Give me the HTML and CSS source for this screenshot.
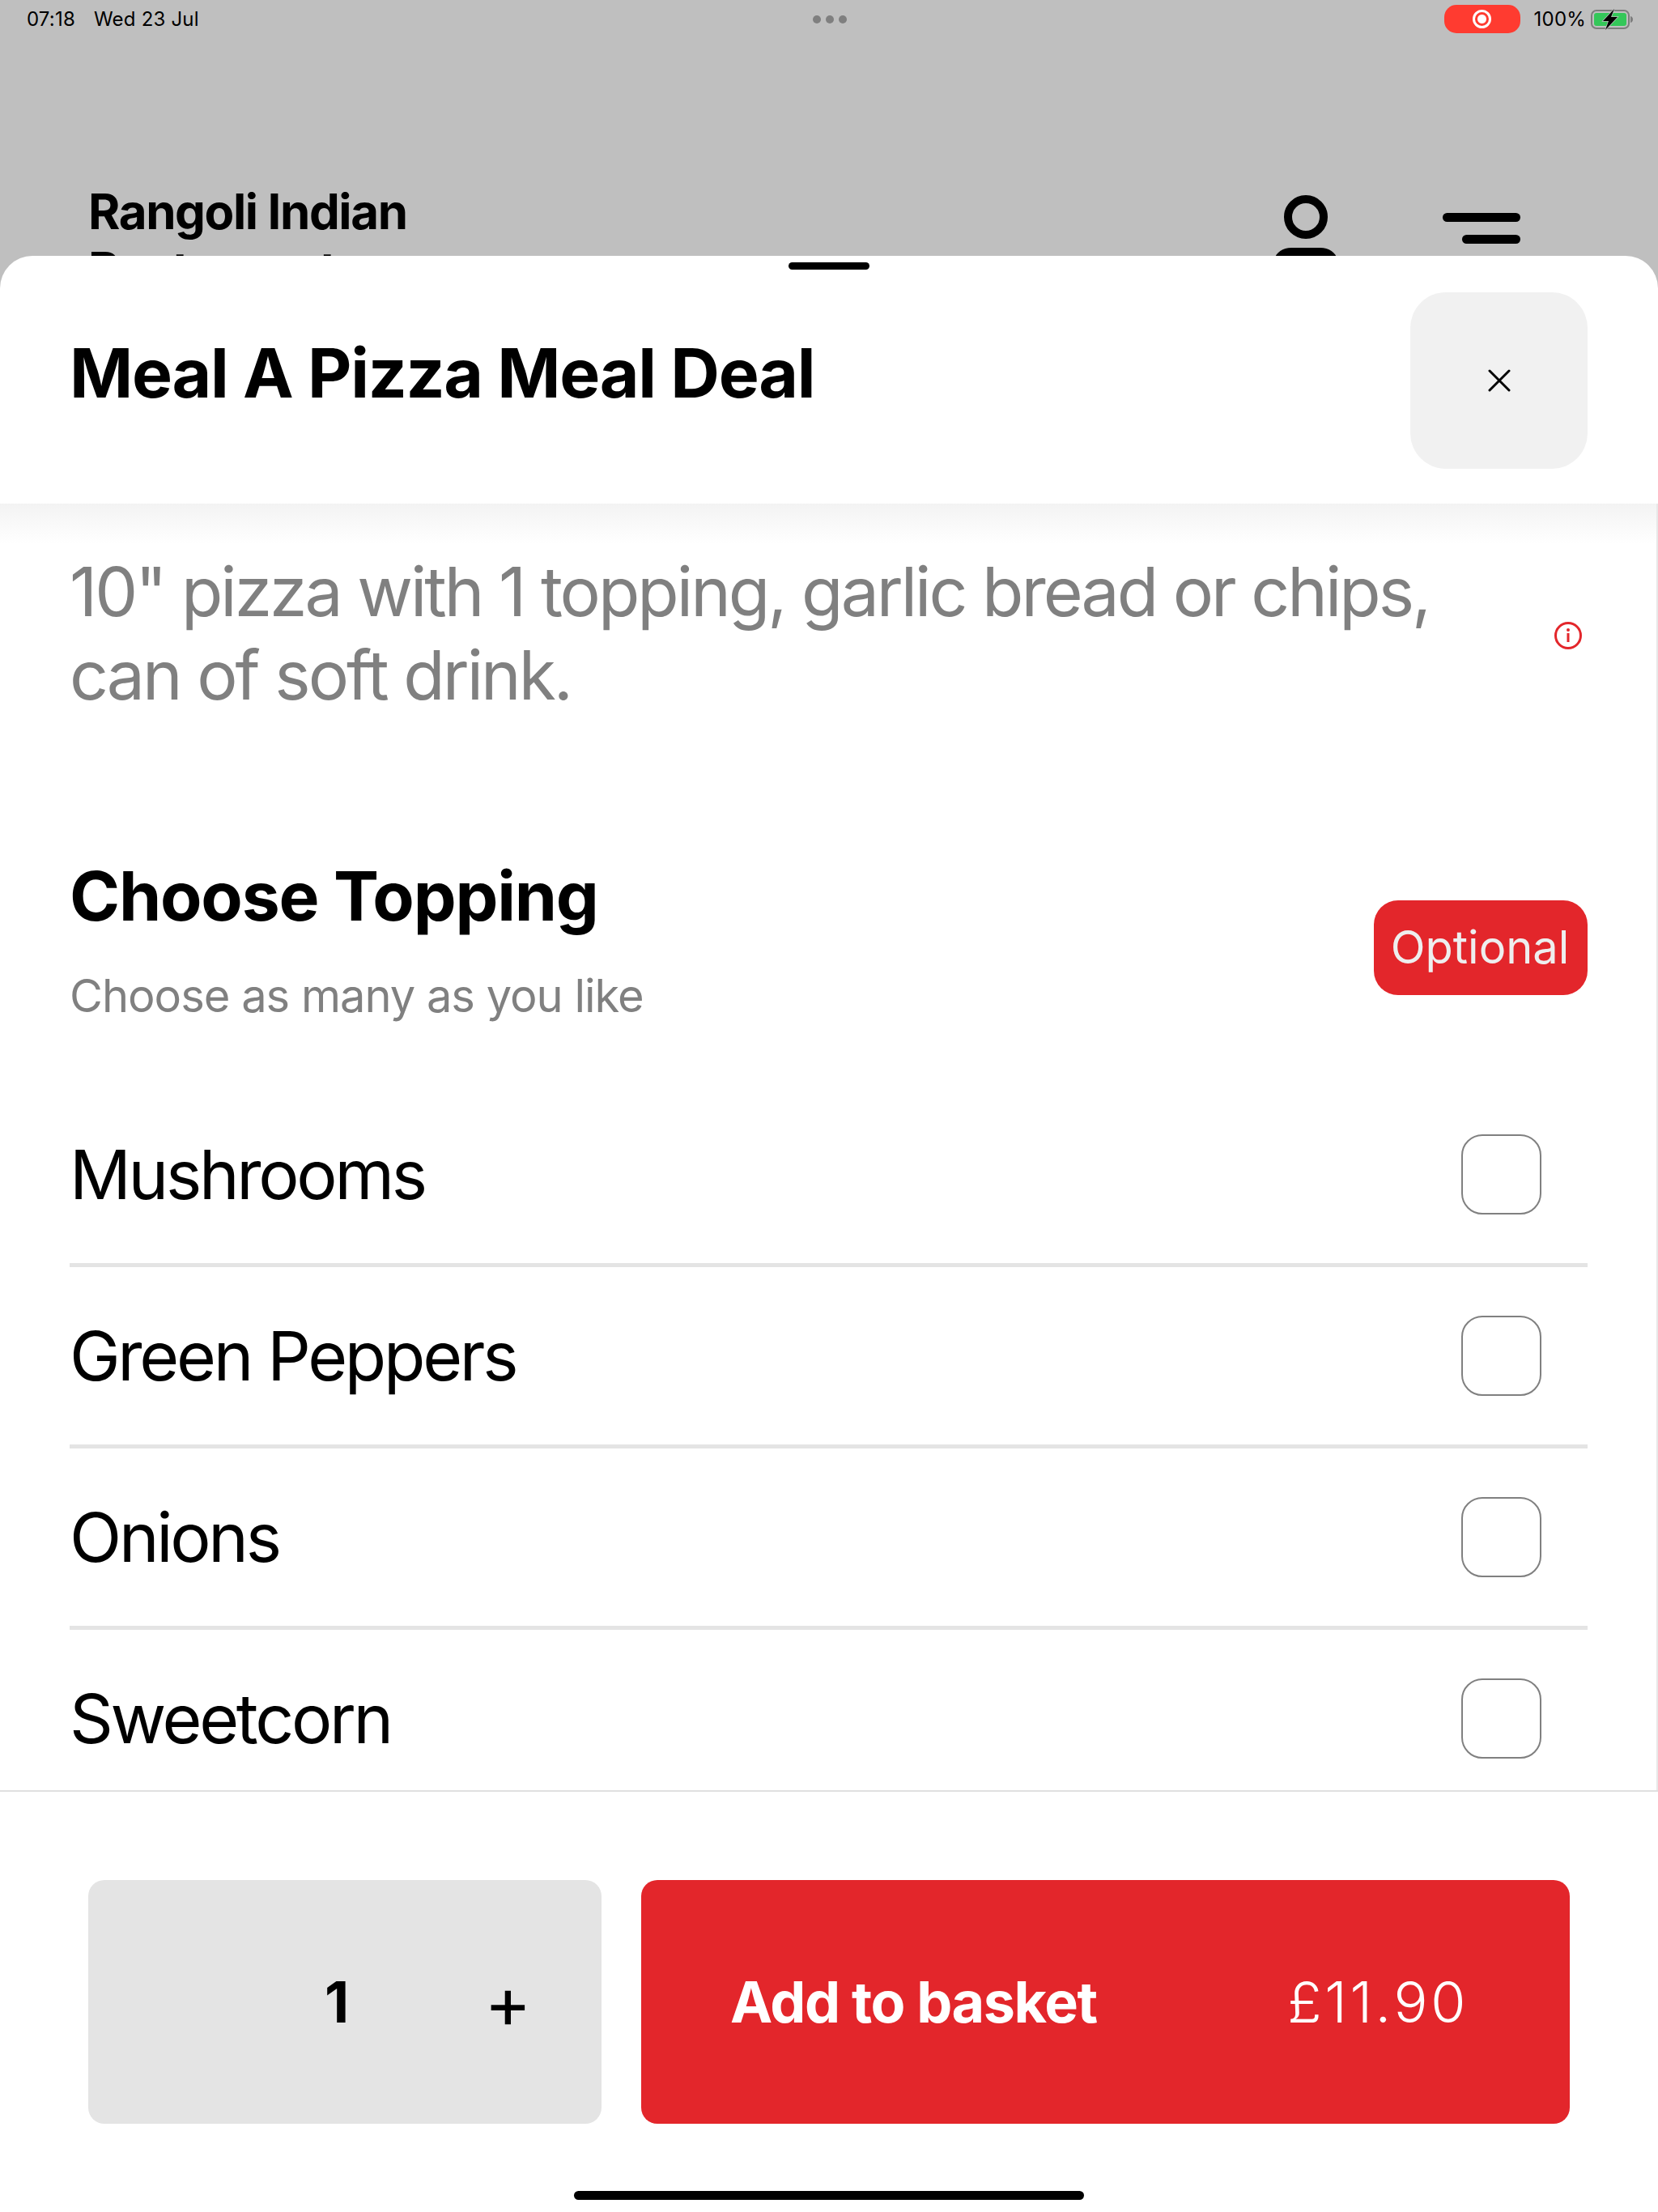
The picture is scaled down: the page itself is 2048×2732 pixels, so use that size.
FILE: index.html
```html
<!DOCTYPE html>
<html lang="en">
<head>
    <meta charset="UTF-8">
    <meta name="viewport" content="width=device-width, initial-scale=1.0">
    <title>Meal A Pizza Meal Deal</title>
    <link rel="stylesheet" href="styles.css">
</head>
<body>

    <div class="screen">
        <div class="status-bar">
            <div class="status-left">
                <span>07:18</span>
                <span>Wed 23 Jul</span>
            </div>
            <div class="status-dots"><i></i><i></i><i></i></div>
            <div class="status-right">
                <span class="record-pill"><i></i></span>
                <span class="battery-text">100%</span>
                <svg class="battery" width="53" height="26" viewBox="0 0 53 26">
                    <rect x="1" y="2" width="46" height="22" rx="6" fill="none" stroke="#7d7d7d" stroke-width="2"/>
                    <rect x="4" y="5" width="40" height="16" rx="3" fill="#34c759"/>
                    <path d="M49 9c2 .5 3 2 3 4s-1 3.500-3 4z" fill="#7d7d7d"/>
                    <path d="M29 0L15 15h7l-4 11 15-16h-8z" fill="#000" stroke="#bfbfbf" stroke-width="1.500" paint-order="stroke"/>
                </svg>
            </div>
        </div>

        <header class="site-header">
            <div class="site-name">Rangoli Indian Restaurant</div>
            <svg class="user-icon" width="84" height="80" viewBox="0 0 84 80">
                <circle cx="42" cy="27" r="22" fill="none" stroke="#000" stroke-width="10"/>
                <path d="M2 85c0-12 10-20 22-20h36c12 0 22 8 22 20z" fill="#000"/>
            </svg>
            <div class="menu-icon"><i></i><i></i></div>
        </header>

        <div class="sheet">
            <span class="grabber"></span>
            <div class="sheet-head">
                <h1>Meal A Pizza Meal Deal</h1>
                <button class="close-btn" type="button">
                    <svg width="28" height="28" viewBox="0 0 28 28">
                        <path d="M2 2l24 24M26 2L2 26" stroke="#000" stroke-width="3" stroke-linecap="round"/>
                    </svg>
                </button>
            </div>

            <div class="sheet-body">
                <div class="description">
                    <p>10" pizza with 1 topping, garlic bread or chips, can of soft drink.</p>
                    <svg class="info-icon" width="36" height="36" viewBox="0 0 36 36">
                        <circle cx="18" cy="18" r="15.500" fill="none" stroke="#e3262b" stroke-width="3"/>
                        <rect x="16.500" y="15" width="3" height="11" fill="#e3262b"/>
                        <circle cx="18" cy="11" r="2" fill="#e3262b"/>
                    </svg>
                </div>

                <div class="group-head">
                    <div>
                        <h2>Choose Topping</h2>
                        <p>Choose as many as you like</p>
                    </div>
                    <span class="badge">Optional</span>
                </div>

                <ul class="options">
                    <li><span>Mushrooms</span><i class="checkbox"></i></li>
                    <li><span>Green Peppers</span><i class="checkbox"></i></li>
                    <li><span>Onions</span><i class="checkbox"></i></li>
                    <li><span>Sweetcorn</span><i class="checkbox"></i></li>
                </ul>
            </div>

            <div class="sheet-foot">
                <div class="qty">
                    <span class="qty-value">1</span>
                    <span class="qty-plus">+</span>
                </div>
                <button class="add-btn" type="button">
                    <span class="add-label">Add to basket</span>
                    <span class="add-price">£11.90</span>
                </button>
            </div>
            <span class="home-bar"></span>
        </div>
    </div>

</body>
</html>
```

FILE: styles.css
```css
* {
    box-sizing: border-box;
}

body {
    margin: 0;
    font-family: Inter, "Liberation Sans", sans-serif;
    color: #000;
}

.screen {
    position: relative;
    width: 2048px;
    height: 2732px;
    overflow: hidden;
    background-color: #bfbfbf;
}

/* status bar */
.status-bar {
    display: flex;
    align-items: center;
    justify-content: space-between;
    height: 47px;
    padding: 0 30px 0 33px;
    font-size: 24px;
    letter-spacing: 0.2px;
}

.status-left {
    display: flex;
    gap: 23px;
    width: 699px;
}

.status-dots {
    display: flex;
    gap: 6px;
}

.status-dots i {
    width: 10px;
    height: 10px;
    border-radius: 50%;
    background-color: #7f7f7f;
}

.status-right {
    display: flex;
    align-items: center;
    justify-content: flex-end;
    width: 700px;
}

.record-pill {
    display: flex;
    align-items: center;
    justify-content: center;
    width: 94px;
    height: 35px;
    margin-right: 17px;
    border-radius: 15px;
    background-color: #ff3b30;
}

.record-pill i {
    width: 23px;
    height: 23px;
    border: 3px solid #fff;
    border-radius: 50%;
    background: radial-gradient(circle, #fff 0 5px, transparent 6px);
}

.battery-text {
    margin-right: 6px;
}

/* page behind the sheet */
.site-header {
    display: flex;
    align-items: flex-start;
    padding: 178px 0 0 109px;
}

.site-name {
    width: 460px;
    font-size: 60px;
    font-weight: 700;
    line-height: 72px;
    letter-spacing: -1.4px;
}

.user-icon {
    margin-left: 1002px;
    margin-top: 16px;
}

.menu-icon {
    display: flex;
    flex-direction: column;
    align-items: flex-end;
    gap: 16px;
    width: 96px;
    margin-left: 127px;
    margin-top: 38px;
}

.menu-icon i {
    display: block;
    width: 96px;
    height: 11px;
    border-radius: 6px;
    background-color: #000;
}

.menu-icon i:last-child {
    width: 72px;
}

/* bottom sheet */
.sheet {
    position: absolute;
    top: 316px;
    left: 0;
    right: 0;
    bottom: 0;
    display: flex;
    flex-direction: column;
    border-radius: 40px 40px 0 0;
    background-color: #fff;
}

.grabber {
    position: absolute;
    top: 8px;
    left: 974px;
    width: 100px;
    height: 9px;
    border-radius: 5px;
    background-color: #000;
}

.sheet-head {
    display: flex;
    align-items: center;
    justify-content: space-between;
    height: 306px;
    padding: 0 87px 0 86px;
}

h1 {
    margin: 0 0 18px;
    font-size: 84px;
    font-weight: 700;
    letter-spacing: -1.3px;
}

.close-btn {
    display: flex;
    align-items: center;
    justify-content: center;
    width: 219px;
    height: 218px;
    margin-top: 1px;
    border: none;
    border-radius: 44px;
    background-color: #f1f1f1;
}

.sheet-body {
    flex: 1;
    overflow: hidden;
    padding: 0 85px 0 86px;
    border-right: 2px solid #e8e8e8;
    background: linear-gradient(to bottom, #f3f3f3, #fff 50px);
}

.description {
    display: flex;
    align-items: center;
    justify-content: space-between;
    padding-top: 57px;
}

.description p {
    width: 1720px;
    margin: 0;
    font-size: 84px;
    line-height: 103px;
    letter-spacing: -3px;
    color: #808080;
}

.info-icon {
    margin-top: 6px;
    margin-right: 6px;
}

.group-head {
    display: flex;
    align-items: center;
    justify-content: space-between;
    margin-top: 171px;
}

h2 {
    margin: 0;
    font-size: 84px;
    font-weight: 700;
    line-height: 102px;
    letter-spacing: -1.2px;
}

.group-head p {
    margin: 38px 0 0;
    font-size: 56px;
    line-height: 68px;
    letter-spacing: -1px;
    color: #808080;
}

.badge {
    display: flex;
    align-items: center;
    justify-content: center;
    width: 264px;
    height: 117px;
    margin-top: 20px;
    padding-right: 2px;
    border-radius: 30px;
    font-size: 56px;
    color: #eee;
    background-color: #e3262b;
}

.options {
    margin: 77px 0 0;
    padding: 0;
    list-style: none;
}

.options li {
    display: flex;
    align-items: center;
    justify-content: space-between;
    height: 224px;
    padding-right: 57px;
    border-bottom: 5px solid #e4e4e4;
    font-size: 84px;
    letter-spacing: -3.3px;
}

.checkbox {
    width: 99px;
    height: 99px;
    border: 2px solid #808080;
    border-radius: 26px;
}

.sheet-foot {
    display: flex;
    gap: 49px;
    height: 521px;
    padding: 109px 109px 0;
    border-top: 2px solid #e0e0e0;
}

.qty {
    display: flex;
    align-items: center;
    width: 634px;
    height: 301px;
    border-radius: 20px;
    background-color: #e4e4e4;
}

.qty-value {
    margin-left: 292px;
    font-size: 70px;
    font-weight: 700;
}

.qty-plus {
    margin-left: 167px;
    font-size: 88px;
}

.add-btn {
    display: flex;
    align-items: center;
    justify-content: space-between;
    flex: 1;
    height: 301px;
    padding: 0 125px 0 110px;
    border: none;
    border-radius: 20px;
    font-family: inherit;
    color: #fff;
    background-color: #e3262b;
}

.add-label {
    font-size: 70px;
    font-weight: 700;
    letter-spacing: -1.4px;
}

.add-price {
    font-size: 70px;
    font-weight: 300;
    letter-spacing: 3.6px;
}

.home-bar {
    position: absolute;
    top: 2390px;
    left: 709px;
    width: 630px;
    height: 11px;
    border-radius: 6px;
    background-color: #000;
}
```
